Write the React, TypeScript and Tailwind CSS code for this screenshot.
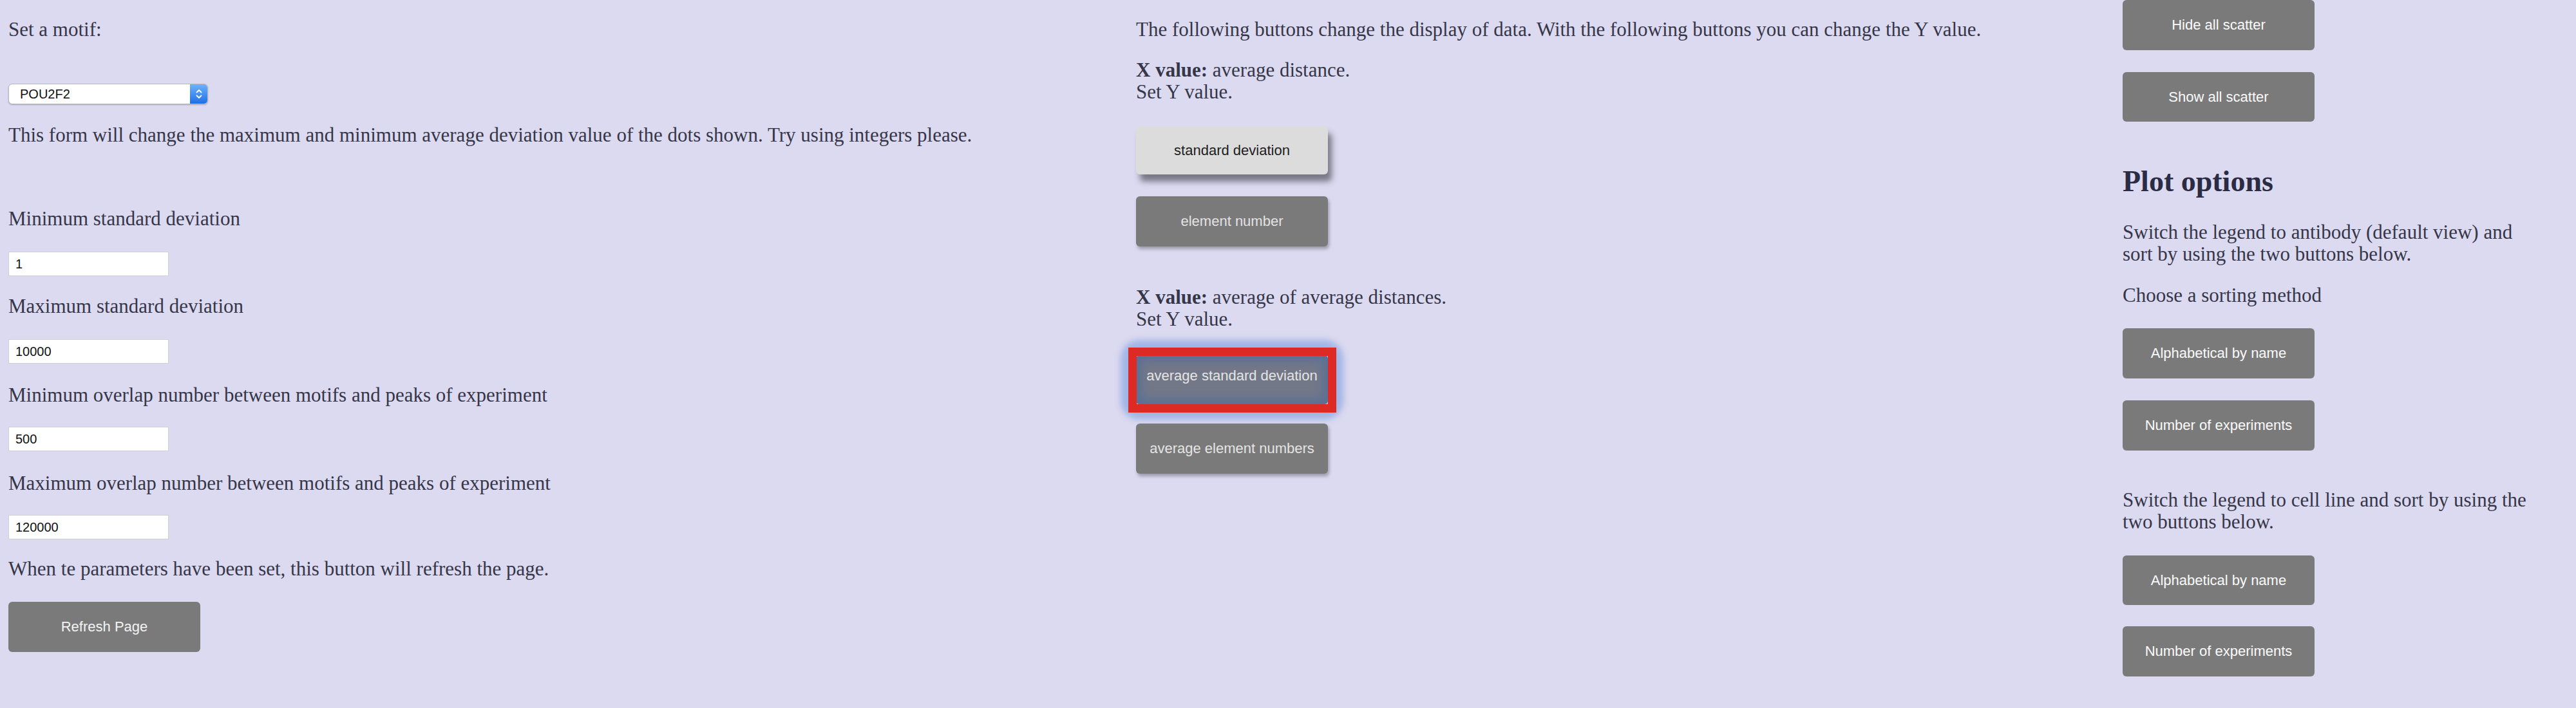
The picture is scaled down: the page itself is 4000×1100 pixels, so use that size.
import React from "react";

const sans = "font-['Liberation_Sans',Arial,Helvetica,sans-serif]";

function Btn({
  children,
  className = "",
}: {
  children: React.ReactNode;
  className?: string;
}) {
  return (
    <div
      className={
        "w-[298px] rounded-[6px] bg-[#7a7a7a] text-[22px] leading-none flex items-center justify-center " +
        sans +
        " " +
        className
      }
    >
      {children}
    </div>
  );
}

function TextInput({ value, className = "" }: { value: string; className?: string }) {
  return (
    <div
      className={
        "w-[249px] h-[38px] bg-white border border-[#cfcfd6] flex items-center pl-[10px] text-[20px] text-[#111] " +
        sans +
        " " +
        className
      }
    >
      {value}
    </div>
  );
}

function Select() {
  return (
    <div className="mt-[67px] w-[310px] h-[32px] flex rounded-[6px] border border-[#b9b9c2] bg-white shadow-[0_1px_2px_rgba(0,0,0,0.25)] overflow-hidden">
      <div className={"flex-1 flex items-center pl-[17px] text-[20px] text-[#111] " + sans}>POU2F2</div>
      <div className="w-[27px] h-full bg-gradient-to-b from-[#6db2fb] to-[#1d6fe6] flex items-center justify-center">
        <svg width="12" height="20" viewBox="0 0 12 20" fill="none">
          <path d="M2.5 7.5 L6 4 L9.5 7.5" stroke="white" strokeWidth="1.8" strokeLinecap="round" strokeLinejoin="round" />
          <path d="M2.5 12.5 L6 16 L9.5 12.5" stroke="white" strokeWidth="1.8" strokeLinecap="round" strokeLinejoin="round" />
        </svg>
      </div>
    </div>
  );
}

function LeftColumn() {
  return (
    <div className="w-[1751px] flex flex-col items-start">
      <p className="mt-[29px]">Set a motif:</p>
      <Select />
      <p className="mt-[31px]">
        This form will change the maximum and minimum average deviation value of the dots shown. Try using integers please.
      </p>
      <p className="mt-[96px]">Minimum standard deviation</p>
      <TextInput value="1" className="mt-[34px]" />
      <p className="mt-[30px]">Maximum standard deviation</p>
      <TextInput value="10000" className="mt-[34px]" />
      <p className="mt-[32px]">Minimum overlap number between motifs and peaks of experiment</p>
      <TextInput value="500" className="mt-[32px]" />
      <p className="mt-[33px]">Maximum overlap number between motifs and peaks of experiment</p>
      <TextInput value="120000" className="mt-[32px]" />
      <p className="mt-[29px]">When te parameters have been set, this button will refresh the page.</p>
      <Btn className="mt-[34px] h-[78px] text-[#f3f3f3]">Refresh Page</Btn>
    </div>
  );
}

function MiddleColumn() {
  return (
    <div className="w-[1532px] flex flex-col items-start">
      <p className="mt-[29px]">
        The following buttons change the display of data. With the following buttons you can change the Y value.
      </p>
      <p className="mt-[29px]">
        <b>X value:</b> average distance.
        <br />
        Set Y value.
      </p>
      <Btn className="mt-[36px] h-[75px] bg-[#dcdcdc] text-[#1e1e1e] shadow-[6px_11px_10px_rgba(40,40,50,0.55)]">
        standard deviation
      </Btn>
      <Btn className="mt-[34px] h-[78px] text-[#e2e2e2] shadow-[2px_4px_5px_rgba(40,40,50,0.35)]">
        element number
      </Btn>
      <p className="mt-[62px]">
        <b>X value:</b> average of average distances.
        <br />
        Set Y value.
      </p>
      <div className="relative mt-[39px] rounded-[10px] shadow-[0_0_10px_24px_rgba(150,175,228,0.85)]">
        <Btn className="h-[76px] bg-[#737888] text-[#e4e4e4] shadow-[inset_0_0_14px_9px_rgba(92,112,148,1)] pb-[12px]">
          average standard deviation
        </Btn>
        <div className="absolute -left-[12px] -top-[12px] -right-[13px] -bottom-[13px] border-[13px] border-[#dd2a25]" />
      </div>
      <Btn className="mt-[30px] h-[78px] text-[#e4e4e4] shadow-[2px_4px_5px_rgba(40,40,50,0.35)]">
        average element numbers
      </Btn>
    </div>
  );
}

function RightColumn() {
  return (
    <div className="w-[640px] flex flex-col items-start">
      <Btn className="h-[78px] text-[#fafafa]">Hide all scatter</Btn>
      <Btn className="mt-[34px] h-[77px] text-[#fafafa]">Show all scatter</Btn>
      <h2 className="mt-[66px] text-[46px] leading-[53px] font-bold text-[#2b2c44]">Plot options</h2>
      <p className="mt-[36px]">
        Switch the legend to antibody (default view) and sort by using the two buttons below.
      </p>
      <p className="mt-[30px]">Choose a sorting method</p>
      <Btn className="mt-[34px] h-[78px] text-[#fafafa]">Alphabetical by name</Btn>
      <Btn className="mt-[34px] h-[78px] text-[#fafafa]">Number of experiments</Btn>
      <p className="mt-[60px]">Switch the legend to cell line and sort by using the two buttons below.</p>
      <Btn className="mt-[35px] h-[77px] text-[#fafafa]">Alphabetical by name</Btn>
      <Btn className="mt-[33px] h-[78px] text-[#fafafa]">Number of experiments</Btn>
    </div>
  );
}

export default function App() {
  return (
    <div className="min-h-screen w-full overflow-hidden bg-[#dcdaf0] text-[#363649] font-['Liberation_Serif','Times_New_Roman',serif] text-[31px] leading-[34px]">
      <div className="flex pl-[13px]">
        <LeftColumn />
        <MiddleColumn />
        <RightColumn />
      </div>
    </div>
  );
}
